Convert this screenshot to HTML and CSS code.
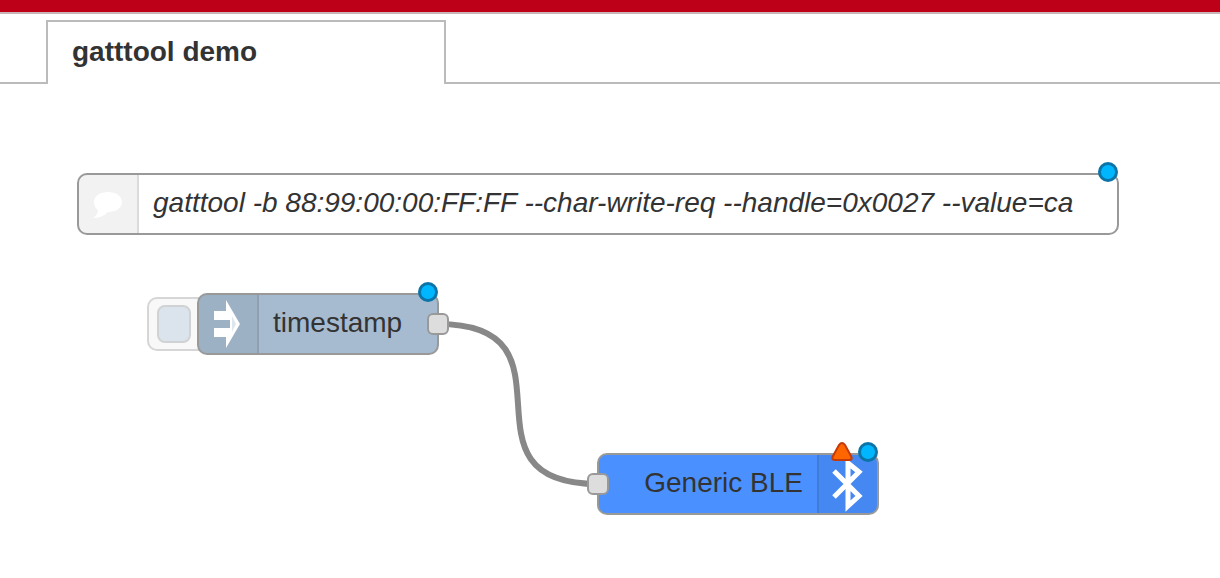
FILE: index.html
```html
<!DOCTYPE html>
<html lang="en">
<head>
<meta charset="utf-8">
<title>gatttool demo</title>
<link rel="stylesheet" href="styles.css">
</head>
<body>
<header class="topbar"></header>
<nav class="tabs">
  <a class="tab" href="#flow">gatttool demo</a>
</nav>
<main class="canvas" id="flow">
  <svg class="wires" aria-hidden="true">
    <path d="M438 240C588 240 448 400 598 400"/>
  </svg>

  <section class="node comment">
    <div class="node-icon">
      <svg width="58" height="58" viewBox="0 0 58 58" aria-hidden="true">
        <path d="M29 17C37 17 43 21 43 27C43 33 37 37 29 37C25 41 20 43 14 43C17 41 19 38 19 35C16 33 15 30 15 27C15 21 21 17 29 17Z" fill="#fff"/>
      </svg>
    </div>
    <span class="node-label">gatttool -b 88:99:00:00:FF:FF --char-write-req --handle=0x0027 --value=ca</span>
    <span class="changed"></span>
  </section>

  <button class="inject-button" type="button" aria-label="Inject timestamp"><span class="inject-face"></span></button>
  <section class="node inject">
    <div class="node-icon">
      <svg width="58" height="58" viewBox="0 0 58 58" aria-hidden="true">
        <path d="M15 16H27V5L41 29L27 53V42H15V33H31V25H15Z" fill="#fff"/>
        <path d="M33 21L37 29L33 37Z" fill="#dfe7ee"/>
      </svg>
    </div>
    <span class="node-label">timestamp</span>
    <span class="port output"></span>
    <span class="changed"></span>
  </section>

  <section class="node ble">
    <span class="port input"></span>
    <span class="node-label">Generic BLE</span>
    <div class="node-icon">
      <svg width="58" height="58" viewBox="0 0 58 58" aria-hidden="true">
        <path d="M15 16L40 41L29 51V8L40 17L15 42" fill="none" stroke="#fff" stroke-width="5"/>
      </svg>
    </div>
    <svg class="warning" width="22" height="20" viewBox="0 0 22 20" aria-hidden="true">
      <path d="M8 3Q11 -1 14 3L20 14Q22 18 18 18H4Q0 18 2 14Z" fill="#f60" stroke="#c53a0b" stroke-width="2"/>
    </svg>
    <span class="changed"></span>
  </section>
</main>
</body>
</html>
```
FILE: styles.css
```css
* {
  box-sizing: border-box;
}

body {
  margin: 0;
  background: #fff;
  color: #333;
  font-family: "Liberation Sans", Arial, sans-serif;
  font-size: 28px;
  line-height: 32px;
}

.topbar {
  height: 14px;
  background: #bd0017;
  border-bottom: 2px solid #c9b5b7;
}

.tabs {
  display: flex;
  height: 70px;
  padding: 6px 46px 0;
  border-bottom: 2px solid #bbb;
}

.tab {
  flex: 0 1 400px;
  height: 64px;
  padding: 14px 24px;
  border: 2px solid #bbb;
  border-bottom: 0;
  background: #fff;
  color: #333;
  font-weight: bold;
  text-decoration: none;
  white-space: nowrap;
}

.canvas {
  position: relative;
  min-height: 480px;
}

.wires {
  position: absolute;
  inset: 0;
  width: 100%;
  height: 100%;
}

.wires path {
  fill: none;
  stroke: #888;
  stroke-width: 6px;
}

.node {
  position: absolute;
  display: flex;
  align-items: center;
  height: 62px;
  border: 2px solid #999;
  border-radius: 10px;
  white-space: nowrap;
}

.node-icon {
  flex: 0 0 60px;
  height: 58px;
  background: rgba(0, 0, 0, 0.05);
  border-right: 2px solid rgba(0, 0, 0, 0.1);
  border-radius: 8px 0 0 8px;
}

.node-icon svg {
  display: block;
}

.node-label {
  padding: 0 14px 2px;
}

.comment {
  left: 77px;
  top: 89px;
  width: 1042px;
  background: #fff;
  font-style: italic;
}

.inject {
  left: 197px;
  top: 209px;
  width: 242px;
  background: #a6bbcf;
}

.ble {
  left: 597px;
  top: 369px;
  width: 282px;
  background: #4a90ff;
  justify-content: flex-end;
}

.ble .node-icon {
  border-right: 0;
  border-left: 2px solid rgba(0, 0, 0, 0.1);
  border-radius: 0 8px 8px 0;
}

.changed {
  position: absolute;
  top: -13px;
  right: -1px;
  width: 20px;
  height: 20px;
  border: 3px solid #0b74a8;
  border-radius: 50%;
  background: #00b7ff;
}

.warning {
  position: absolute;
  top: -13px;
  right: 24px;
}

.port {
  position: absolute;
  top: 18px;
  width: 22px;
  height: 22px;
  border: 2px solid #999;
  border-radius: 6px;
  background: #ddd;
}

.output {
  right: -12px;
}

.input {
  left: -12px;
}

.inject-button {
  position: absolute;
  left: 147px;
  top: 213px;
  width: 64px;
  height: 54px;
  padding: 6px 8px;
  border: 2px solid #d6d6d6;
  border-radius: 10px;
  background: #f8f8f8;
}

.inject-face {
  display: block;
  width: 34px;
  height: 38px;
  border: 2px solid #d0d2d4;
  border-radius: 8px;
  background: #dbe4ec;
}
```
